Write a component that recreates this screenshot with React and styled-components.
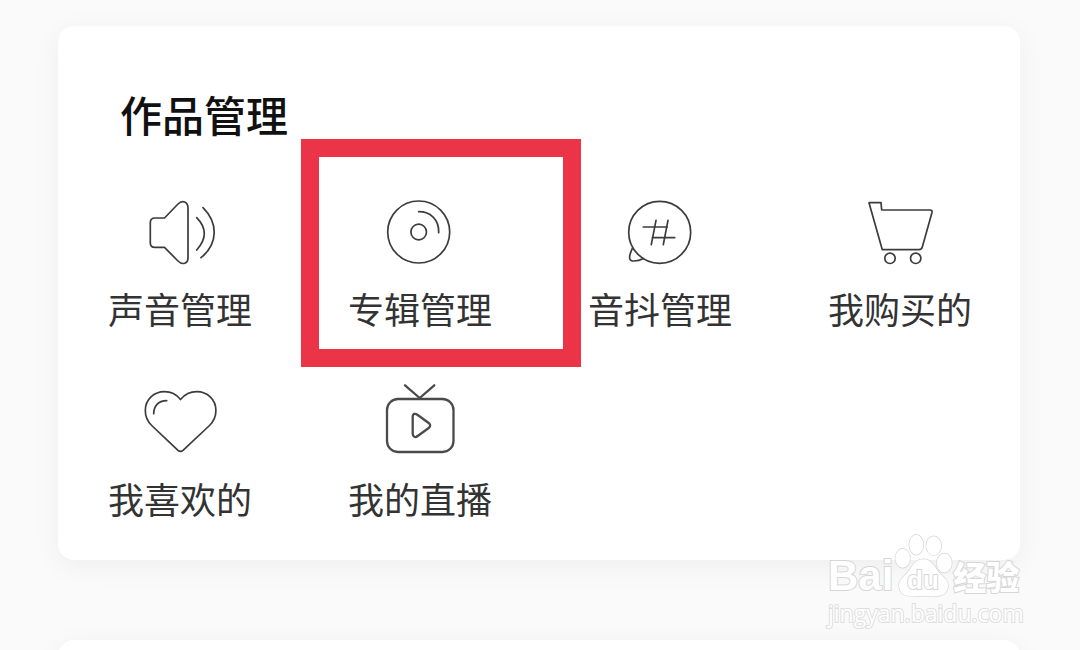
import styled, { createGlobalStyle } from "styled-components";

const items = [
  { name: "声音管理", Icon: SoundIcon },
  { name: "专辑管理", Icon: AlbumIcon, marked: true },
  { name: "音抖管理", Icon: TopicIcon },
  { name: "我购买的", Icon: CartIcon },
  { name: "我喜欢的", Icon: HeartIcon },
  { name: "我的直播", Icon: LiveIcon },
];

export default function App() {
  return (
    <>
      <GlobalStyle />
      <Page>
        <Card>
          <Title>作品管理</Title>
          <Grid>
            {items.map(({ name, Icon, marked }) => (
              <Item key={name} type="button">
                <Icon />
                <span>{name}</span>
                {marked && <Marker />}
              </Item>
            ))}
          </Grid>
        </Card>
        <NextCard />
        <Watermark />
      </Page>
    </>
  );
}

function SoundIcon() {
  return (
    <Icon viewBox="0 0 72 72">
      <path d="M20.500 22H11q-4.700 0-4.700 4.700v20q0 4.700 4.700 4.700h9.500L34 65c4.500 4.500 10 2.500 10-3V12c0-6-5.500-8.500-10-4Z" />
      <path d="M52.700 21.700q15.200 15.600 0 32.300" />
      <path d="M59 11.700c15 15 15.500 36-2 50" />
    </Icon>
  );
}

function AlbumIcon() {
  return (
    <Icon viewBox="0 0 72 72">
      <circle cx="34.700" cy="36" r="31" />
      <circle cx="34.700" cy="36" r="7.800" />
      <path d="M34.700 15.700c12 0 20.500 8 20 21" />
    </Icon>
  );
}

function TopicIcon() {
  return (
    <Icon viewBox="0 0 72 72">
      <circle cx="35.700" cy="36.300" r="31" />
      <path d="M8.300 52.300C4 62 5 65 10 65q5 0 9.500-2.500" />
      <path d="M19.300 31h24M28.300 41.700h22.400M32 24.300l-4.700 24.400M44 24.300l-4.700 24.400" />
    </Icon>
  );
}

function CartIcon() {
  return (
    <Icon viewBox="0 0 72 72">
      <path d="M5 6.700h12l.7 7.300H66q2.500 0 2 2.500l-9.700 34.500q-.8 2.700-3.300 2.700H18.300Z" />
      <circle cx="26" cy="62.300" r="5.200" />
      <circle cx="51.700" cy="62.300" r="5.200" />
    </Icon>
  );
}

function HeartIcon() {
  return (
    <Icon viewBox="0 0 72 72">
      <path d="M36.500 13.500C32.500 8.500 27 5.700 20.500 5.700 10 5.700 1.300 13.500 1.300 24.500c0 6 2.300 11 6.400 15L34 64.300q2.500 2 5 0L65.500 39.500c4.100-4 6.400-9 6.400-15 0-11-8.700-18.800-19.200-18.800-6.500 0-12 2.800-16.200 7.800Z" />
      <path d="M9.700 27.700c0-7 4-13 13-13" />
    </Icon>
  );
}

function LiveIcon() {
  return (
    <Icon viewBox="0 0 72 72" $bold>
      <rect x="3" y="13" width="66.500" height="53" rx="11" />
      <path d="M21-.7 35.700 12 50.300-.7" />
      <path d="M28.700 31v16.500c0 3.500 2.500 4.500 5 2.500l11-8q3-2.500 0-5l-11-8c-2.500-2-5-1.500-5 2Z" />
    </Icon>
  );
}

function Watermark() {
  return (
    <Mark>
      <Brand>
        <span>Bai</span>
        <Paw viewBox="0 0 60 66">
          <ellipse cx="9.700" cy="26.300" rx="7.300" ry="9.500" />
          <ellipse cx="23.300" cy="12.700" rx="7" ry="10" />
          <ellipse cx="40.700" cy="13.700" rx="7.500" ry="9.500" />
          <ellipse cx="51.300" cy="31" rx="7.500" ry="9.500" />
          <path d="M30 27.300c8 0 11 6 15 12 4 5 10 8 10 14 0 13-13 11-25 10.500C19 64.500 6 66 6 53c0-6 6-9 10-14 4-6 7-11.700 14-11.700Z" />
          <text x="30" y="57" textAnchor="middle">
            du
          </text>
        </Paw>
        <BrandName>经验</BrandName>
      </Brand>
      <Site>jingyan.baidu.com</Site>
    </Mark>
  );
}

const GlobalStyle = createGlobalStyle`
  * {
    box-sizing: border-box;
  }
  body {
    margin: 0;
    background: #fafafa;
    color: #333;
    font-family: "Noto Sans CJK SC", sans-serif;
  }
`;

const Page = styled.main`
  position: relative;
  height: 100vh;
  overflow: hidden;
  padding: 26px 60px 0 58px;
`;

const Card = styled.section`
  padding: 58px 0 40px;
  border-radius: 16px;
  background: #fff;
  box-shadow: 0 6px 28px rgba(0, 0, 0, 0.05);
`;

const NextCard = styled(Card)`
  margin-top: 80px;
`;

const Title = styled.h1`
  margin: 0 62px;
  color: #111;
  font-size: 42px;
  font-weight: 500;
  line-height: 60px;
`;

const Grid = styled.div`
  display: grid;
  grid-template-columns: repeat(4, 1fr);
  row-gap: 56px;
  margin-top: 52px;
  padding-left: 2px;
`;

const Item = styled.button`
  position: relative;
  display: flex;
  flex-direction: column;
  align-items: center;
  gap: 18px;
  padding: 0;
  border: none;
  background: none;
  color: inherit;
  font: inherit;
  font-size: 36px;
  line-height: 44px;
  cursor: pointer;
`;

const Icon = styled.svg`
  width: 72px;
  height: 72px;
  overflow: visible;
  fill: none;
  stroke: ${(props) => (props.$bold ? "#4a4a4a" : "#3c3c3c")};
  stroke-width: ${(props) => (props.$bold ? 2.3 : 1.7)};
  stroke-linecap: round;
  stroke-linejoin: round;
`;

const Marker = styled.i`
  position: absolute;
  top: -57px;
  left: 1px;
  width: 280px;
  height: 228px;
  border: 18px solid #eb3447;
  pointer-events: none;
`;

const Mark = styled.div`
  position: absolute;
  right: 59px;
  bottom: 22px;
  width: 193px;
  color: #fff;
  -webkit-text-stroke: 2px #d6d6d6;
  paint-order: stroke fill;
`;

const Brand = styled.div`
  display: flex;
  align-items: flex-end;
  height: 66px;
  font-family: "Liberation Sans", sans-serif;
  font-size: 42px;
  font-weight: 700;
  line-height: 44px;
`;

const BrandName = styled.span`
  font-family: "Noto Sans CJK SC", sans-serif;
  font-size: 33px;
  font-weight: 900;
`;

const Paw = styled.svg`
  flex: none;
  width: 60px;
  height: 66px;
  fill: #fff;
  stroke: #d6d6d6;
  stroke-width: 1.4;
  text {
    font-size: 26px;
    stroke-width: 2;
  }
`;

const Site = styled.div`
  font-family: "Open Sans", sans-serif;
  font-size: 23px;
  line-height: 30px;
  -webkit-text-stroke-color: #dedede;
`;
